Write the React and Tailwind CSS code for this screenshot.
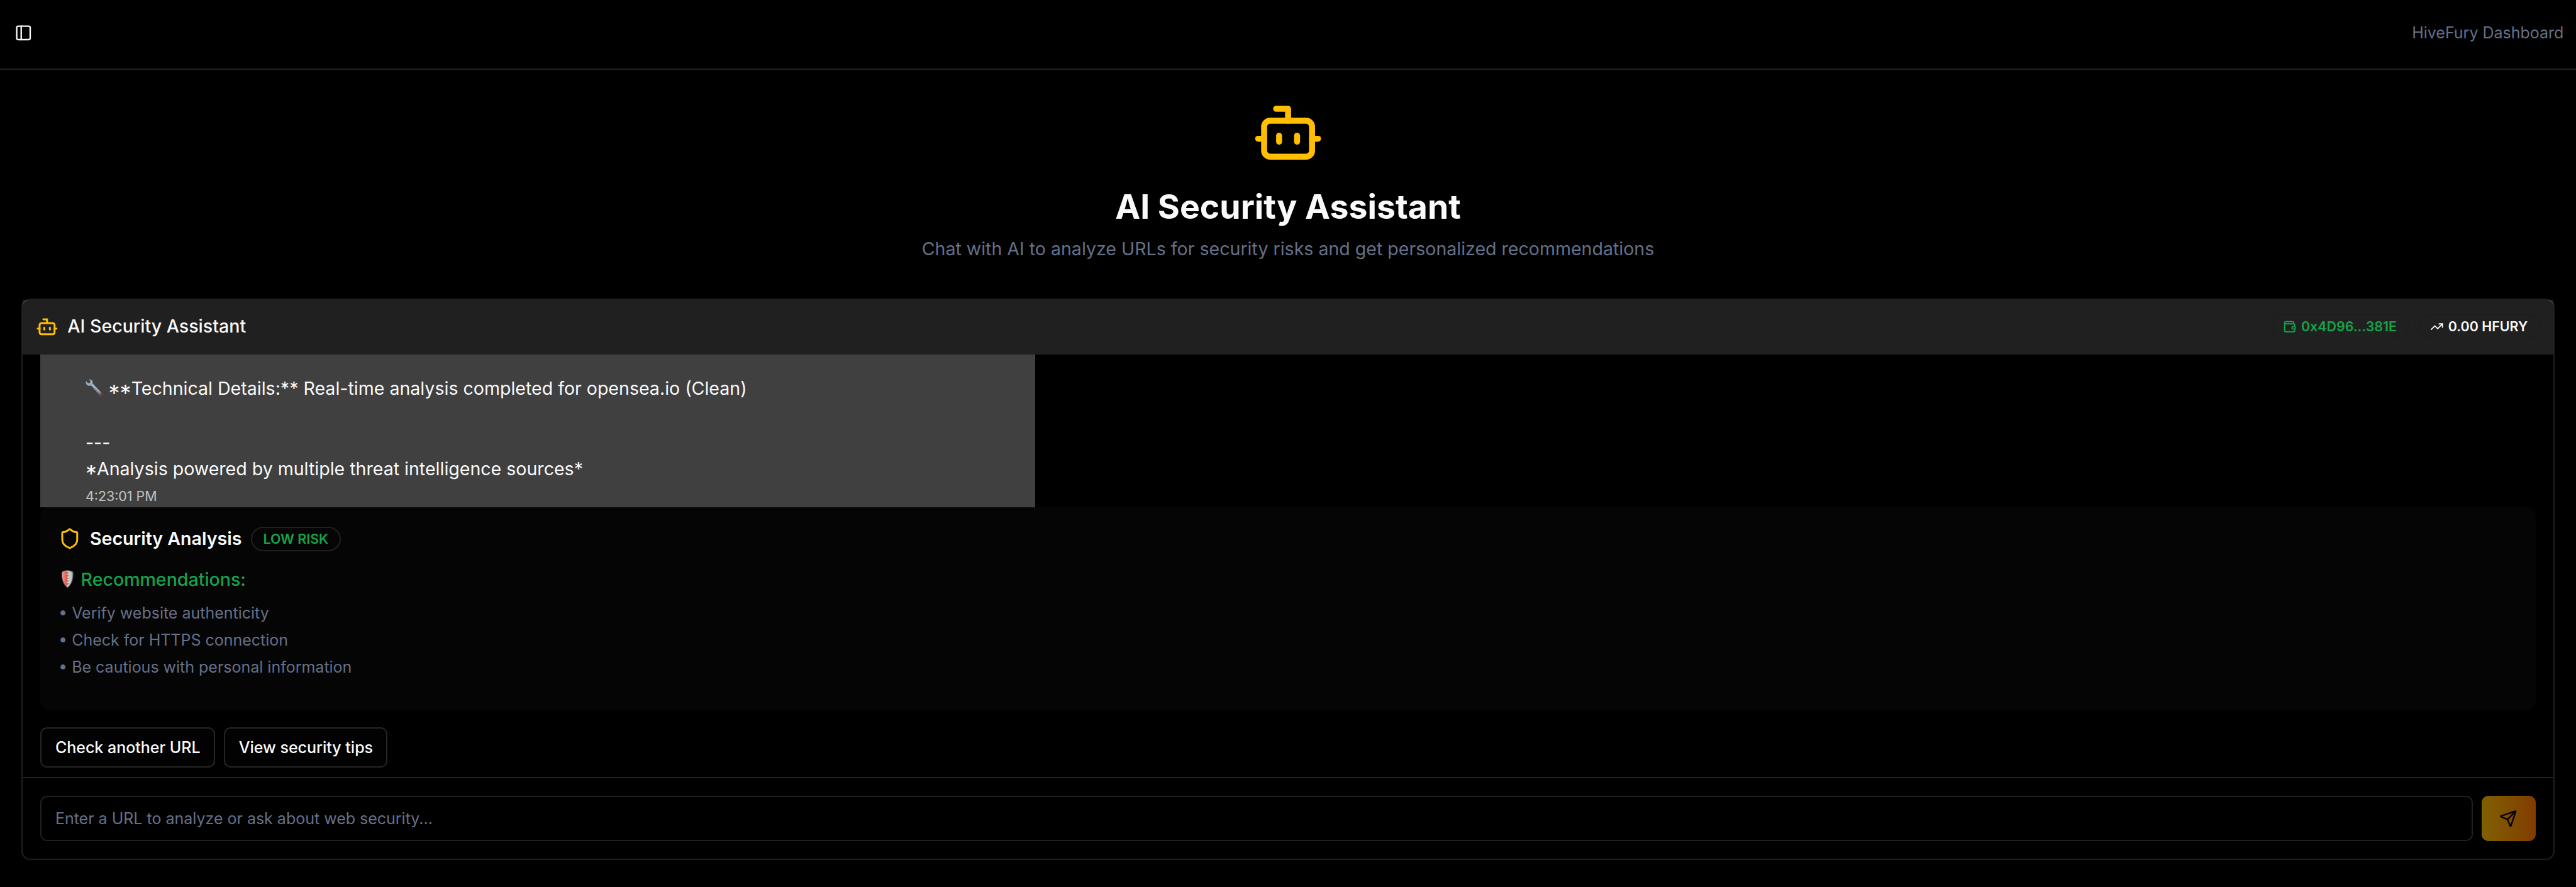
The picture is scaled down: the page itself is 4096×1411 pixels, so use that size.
import React from "react";
import { Bot, PanelLeft, Send, Shield, TrendingUp, Wallet } from "lucide-react";

function WrenchGlyph() {
  return (
    <svg viewBox="0 0 32 32" className="mr-[4.5px] inline-block h-4 w-4 align-[-2.3px]">
      <defs>
        <linearGradient id="steel" gradientUnits="userSpaceOnUse" x1="3" y1="3" x2="30" y2="30">
          <stop offset="0" stopColor="#9fb6c6" />
          <stop offset="0.4" stopColor="#93a2b3" />
          <stop offset="0.7" stopColor="#8a7f8c" />
          <stop offset="1" stopColor="#6a4a50" />
        </linearGradient>
      </defs>
      <path
        d="M6.700 0.400C9.500 0.300 12.300 1.800 13 4.600C13.300 6.300 12.600 7.400 13.600 8.500C19 14.500 26 21 30.800 26C32.600 28.200 30.800 31 28.300 31C26.500 31 25.600 30 24.800 29C19.500 23 14.500 17 10.200 12.400C9.200 11.600 8 12.600 6.400 12.300C2.800 11.800 0 8.700 0.300 4.600C0.400 3.600 1 3.100 1.500 3.800L4.300 7L7.400 6.600L8.700 3.700L6.400 1.400C6 0.900 6.100 0.500 6.700 0.400Z"
        fill="url(#steel)"
        stroke="#33353b"
        strokeWidth="0.500"
      />
      <path d="M12.300 9.800L25.500 23.500" stroke="#bccbd8" strokeWidth="1.200" strokeLinecap="round" />
      <circle cx="28.100" cy="27.700" r="1.400" fill="#2f282c" />
    </svg>
  );
}

function ShieldGlyph() {
  return (
    <svg viewBox="0 0 32 32" className="mr-[3.9px] inline-block h-4 w-4 align-[-2.3px]">
      <defs>
        <linearGradient id="enamel" x1="0" y1="0" x2="1" y2="0">
          <stop offset="0" stopColor="#ff8f80" />
          <stop offset="1" stopColor="#c43c2c" />
        </linearGradient>
        <linearGradient id="silver" x1="0" y1="0" x2="1" y2="0">
          <stop offset="0" stopColor="#f4f4f6" />
          <stop offset="1" stopColor="#b4b8be" />
        </linearGradient>
      </defs>
      <path d="M16 0C20 0 24 1.200 26.300 3C27.400 14 24.500 25.500 16 32C7.500 25.500 4.600 14 5.700 3C8 1.200 12 0 16 0Z" fill="#5c5c5e" />
      <path d="M16 1.500C19.500 1.500 23 2.500 24.900 3.900C25.700 14 23.300 24 16 30C8.700 24 6.300 14 7.100 3.900C9 2.500 12.500 1.500 16 1.500Z" fill="url(#silver)" />
      <path
        d="M14.500 1.600L14 2.600L18.700 5L14 7.500L18.700 10L14 12.300L18.700 14.700L14 17L18.700 19.300L14 21.700L18.500 24L15 26.500L16 30C8.700 24 6.300 14 7.100 3.900C8.800 2.600 11.500 1.800 14.500 1.600Z"
        fill="url(#enamel)"
      />
    </svg>
  );
}

// Larger asterisks, centred on the capitals that follow them.
function Stars({ children }) {
  return <span className="align-[-5.5px] text-[20px] leading-[0] tracking-[0.1px]">{children}</span>;
}

function TopBar() {
  return (
    <header className="flex h-[62px] items-center justify-between border-b-[1.2px] border-[#202020] pr-[11px] pb-[2px] pl-[7px]">
      <button className="flex size-7 items-center justify-center">
        <PanelLeft size={16} />
      </button>
      <span className="text-sm text-[#657089]">HiveFury Dashboard</span>
    </header>
  );
}

function Hero() {
  return (
    <section className="flex flex-col items-center pt-6 pb-8">
      <Bot size={64} className="text-[#ffbf00]" />
      <h1 className="mt-[16.5px] text-3xl font-bold">AI Security Assistant</h1>
      <p className="mt-[7.5px] text-base text-[#657089]">
        Chat with AI to analyze URLs for security risks and get personalized recommendations
      </p>
    </section>
  );
}

function ChatHeader() {
  return (
    <div className="flex h-[49px] shrink-0 items-center justify-between bg-white/[0.125] px-3 pb-px">
      <div className="flex items-center gap-2">
        <Bot size={20} className="text-[#ffbf00]" />
        <span className="text-base font-medium">AI Security Assistant</span>
      </div>
      <div className="flex gap-2 text-xs font-semibold">
        <span className="flex h-[22px] items-center gap-1 rounded-full border-[1.2px] border-[#1e1e1e] px-[9.8px] text-[#16a34a]">
          <Wallet size={12} />
          0x4D96...381E
        </span>
        <span className="flex h-[22px] items-center gap-1 rounded-full border-[1.2px] border-[#1e1e1e] px-[9.8px]">
          <TrendingUp size={12} />
          0.00 HFURY
        </span>
      </div>
    </div>
  );
}

const tips = [
  "Verify website authenticity",
  "Check for HTTPS connection",
  "Be cautious with personal information",
];

function Analysis() {
  return (
    <div className="h-[180px] rounded-lg bg-[#050505] px-4 pt-[17px]">
      <div className="flex h-[22px] items-center gap-2">
        <Shield size={20} className="text-[#ffbf00]" />
        <span className="text-base font-semibold">Security Analysis</span>
        <span className="flex h-[22px] items-center rounded-full border-[1.2px] border-[#202020] px-2.5 text-xs font-semibold text-[#16a34a]">
          LOW RISK
        </span>
      </div>
      <div className="mt-[13.5px] text-base font-medium text-[#16a34a]">
        <ShieldGlyph />
        Recommendations:
      </div>
      <ul className="mt-2 space-y-1 text-sm text-[#657089]">
        {tips.map((tip) => (
          <li key={tip}>• {tip}</li>
        ))}
      </ul>
    </div>
  );
}

function Chat() {
  return (
    <main className="mx-[19px] flex h-[500px] flex-col rounded-lg border-[1.2px] border-[#202020]">
      <ChatHeader />
      <div className="h-[376px] shrink-0 px-4">
        <div className="h-[136px] w-[886px] bg-[#404040] px-10 pt-[18.2px]">
          <div className="text-base">
            <p className="h-6">
              <WrenchGlyph />
              <Stars>**</Stars>
              Technical Details:** Real-time analysis completed for opensea.io (Clean)
            </p>
            <p className="mt-6 h-6">---</p>
            <p className="h-6">
              <Stars>*</Stars>
              Analysis powered by multiple threat intelligence sources*
            </p>
          </div>
          <div className="mt-[3.8px] text-xs opacity-70">4:23:01 PM</div>
        </div>
        <Analysis />
        <div className="mt-4 flex gap-2 text-sm font-medium">
          <button className="h-9 rounded-md border-[1.2px] border-[#262626] bg-[#020202] px-3 pt-px">Check another URL</button>
          <button className="h-9 rounded-md border-[1.2px] border-[#262626] bg-[#020202] px-3 pt-px">View security tips</button>
        </div>
      </div>
      <div className="flex gap-2 border-t-[1.2px] border-[#202020] p-4">
        <input
          className="h-10 flex-1 rounded-md border-[1.2px] border-[#202020] px-3 text-sm placeholder:text-[#657089]"
          placeholder="Enter a URL to analyze or ask about web security..."
        />
        <button className="flex h-10 w-12 items-center justify-center rounded-md bg-linear-to-r from-[#806000] to-[#803c00] text-black">
          <Send size={16} />
        </button>
      </div>
    </main>
  );
}

export default function App() {
  return (
    <div className="h-[1411px] w-[4096px] overflow-hidden bg-black">
      <div className="w-[2294px] font-['Inter',sans-serif] text-[#fafafa] [zoom:1.78553]">
        <TopBar />
        <Hero />
        <Chat />
      </div>
    </div>
  );
}
